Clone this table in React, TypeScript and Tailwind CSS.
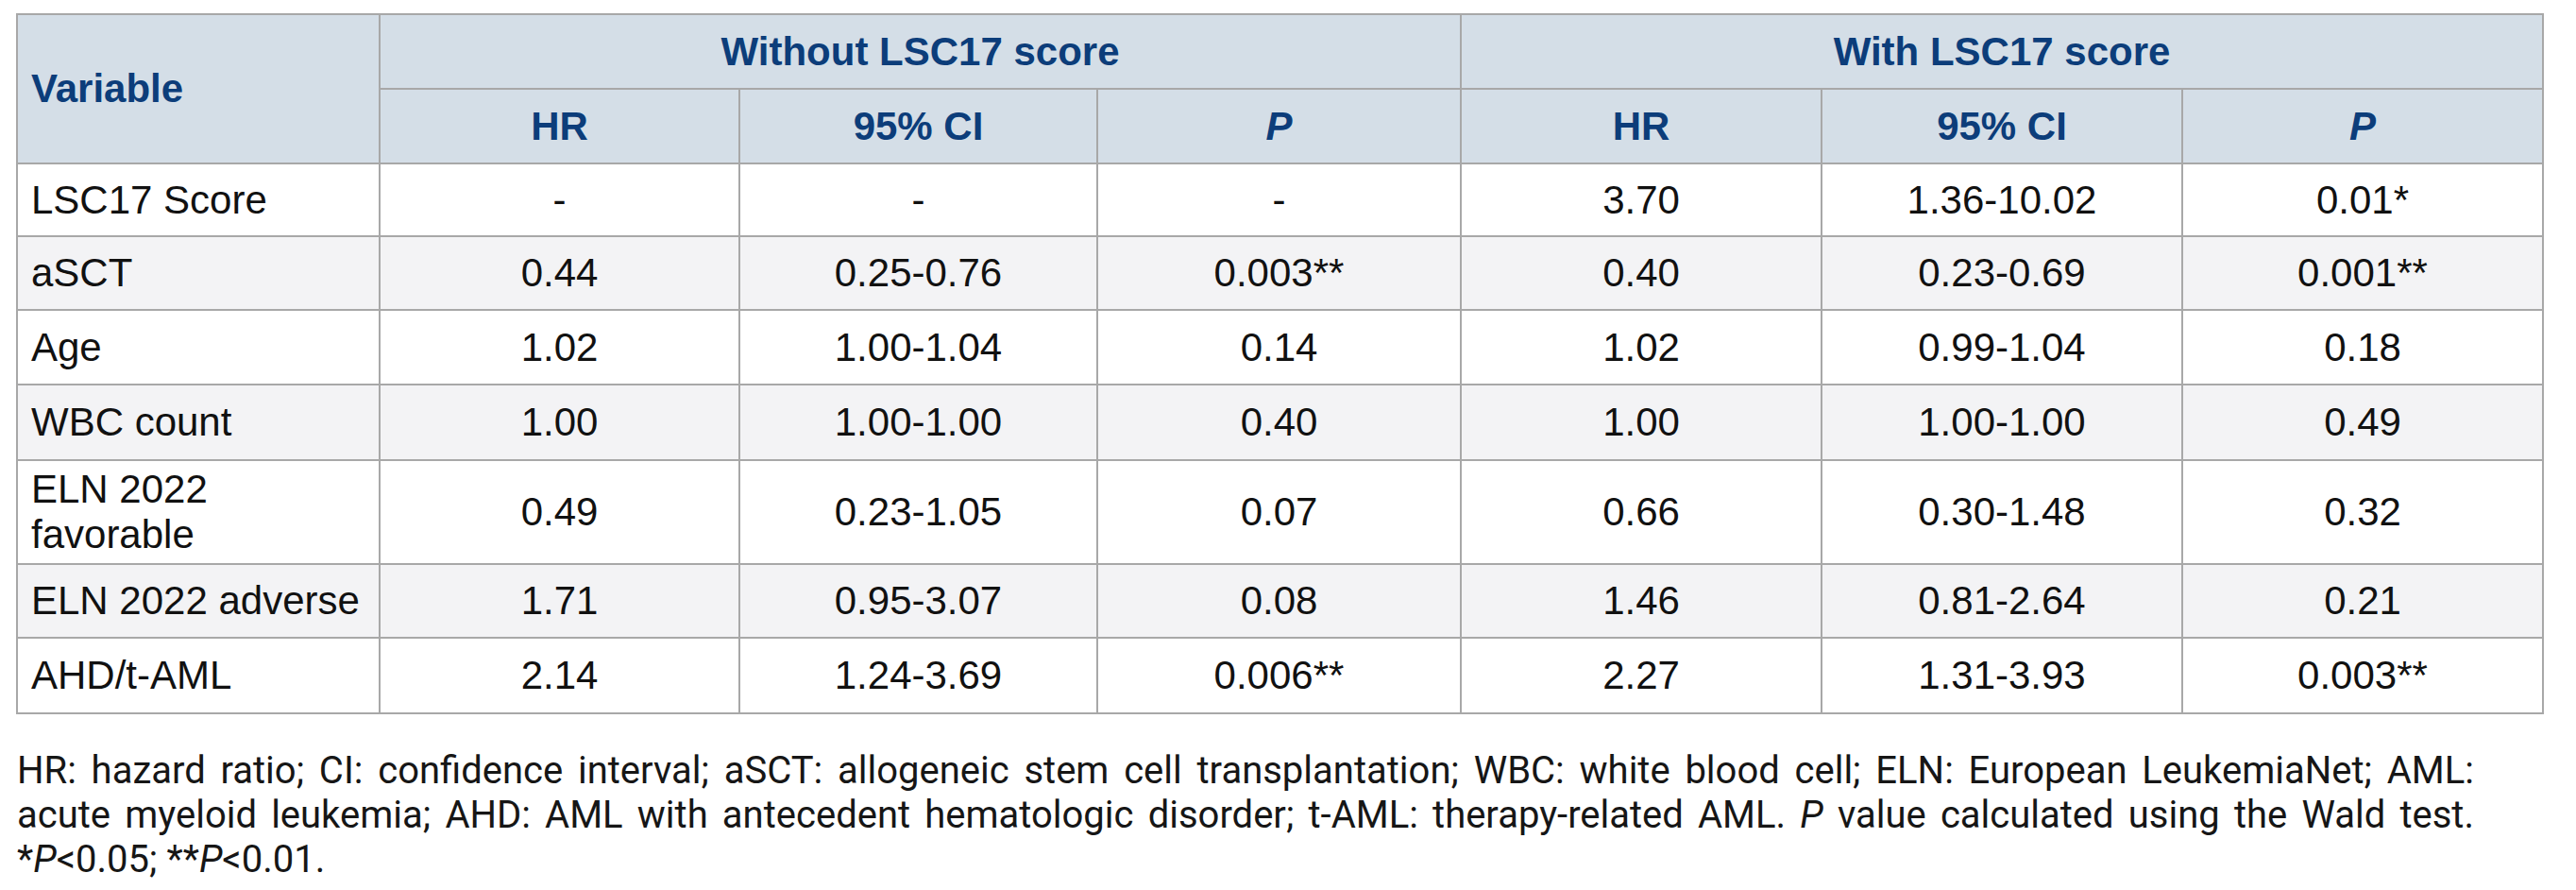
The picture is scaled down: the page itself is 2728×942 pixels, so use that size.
import React from 'react';

type Row = {
  label: React.ReactNode;
  without: [string, string, string];
  withScore: [string, string, string];
  h: string;
  shaded?: boolean;
};

const rows: Row[] = [
  { label: 'LSC17 Score', without: ['-', '-', '-'], withScore: ['3.70', '1.36-10.02', '0.01*'], h: 'h-[77px]' },
  { label: 'aSCT', without: ['0.44', '0.25-0.76', '0.003**'], withScore: ['0.40', '0.23-0.69', '0.001**'], h: 'h-[78px]', shaded: true },
  { label: 'Age', without: ['1.02', '1.00-1.04', '0.14'], withScore: ['1.02', '0.99-1.04', '0.18'], h: 'h-[79px]' },
  { label: 'WBC count', without: ['1.00', '1.00-1.00', '0.40'], withScore: ['1.00', '1.00-1.00', '0.49'], h: 'h-[80px]', shaded: true },
  {
    label: (
      <>
        ELN 2022
        <br />
        favorable
      </>
    ),
    without: ['0.49', '0.23-1.05', '0.07'],
    withScore: ['0.66', '0.30-1.48', '0.32'],
    h: 'h-[110px]',
  },
  { label: 'ELN 2022 adverse', without: ['1.71', '0.95-3.07', '0.08'], withScore: ['1.46', '0.81-2.64', '0.21'], h: 'h-[78px]', shaded: true },
  { label: 'AHD/t-AML', without: ['2.14', '1.24-3.69', '0.006**'], withScore: ['2.27', '1.31-3.93', '0.003**'], h: 'h-[80px]' },
];

const cell = 'border-2 border-[#a8a8a8] text-center align-middle p-0';
const headCell = 'border-2 border-[#a8a8a8] text-center align-middle p-0 font-bold text-[#0c3d7a]';

export default function App() {
  return (
    <div className="min-h-screen bg-white pl-[17px] pt-[14px] text-[#111111]">
      <table className="table-fixed border-collapse border-2 border-[#a0a0a0] [font-family:'Liberation_Sans',Arial,Helvetica,sans-serif] text-[42px] leading-[42px]">
        <colgroup>
          <col className="w-[384px]" />
          <col className="w-[381px]" />
          <col className="w-[379px]" />
          <col className="w-[385px]" />
          <col className="w-[382px]" />
          <col className="w-[382px]" />
          <col className="w-[382px]" />
        </colgroup>
        <thead className="bg-[#d4dee7]">
          <tr className="h-[79px]">
            <th rowSpan={2} className={`${headCell} pl-[14px] text-left`}>
              Variable
            </th>
            <th colSpan={3} className={headCell}>
              Without LSC17 score
            </th>
            <th colSpan={3} className={headCell}>
              With LSC17 score
            </th>
          </tr>
          <tr className="h-[79px]">
            <th className={headCell}>HR</th>
            <th className={headCell}>95% CI</th>
            <th className={headCell}>
              <i>P</i>
            </th>
            <th className={headCell}>HR</th>
            <th className={headCell}>95% CI</th>
            <th className={headCell}>
              <i>P</i>
            </th>
          </tr>
        </thead>
        <tbody>
          {rows.map((r, i) => (
            <tr key={i} className={`${r.h} ${r.shaded ? 'bg-[#f3f3f5]' : 'bg-white'}`}>
              <td className={`${cell} pl-[14px] text-left leading-[48px]`}>{r.label}</td>
              {r.without.map((v, j) => (
                <td key={`a${j}`} className={cell}>
                  {v}
                </td>
              ))}
              {r.withScore.map((v, j) => (
                <td key={`b${j}`} className={cell}>
                  {v}
                </td>
              ))}
            </tr>
          ))}
        </tbody>
      </table>

      <div className="mt-[36px] w-[2603px] pl-[1px] [font-family:Roboto,'Open_Sans',sans-serif] text-[40px] leading-[47px] text-[#161616]">
        <div className="text-justify [text-align-last:justify]">
          HR: hazard ratio; CI: confidence interval; aSCT: allogeneic stem cell transplantation; WBC: white blood cell; ELN: European LeukemiaNet; AML:
        </div>
        <div className="text-justify [text-align-last:justify]">
          acute myeloid leukemia; AHD: AML with antecedent hematologic disorder; t-AML: therapy-related AML. <i>P</i> value calculated using the Wald test.
        </div>
        <div>
          *<i>P</i>&lt;0.05; **<i>P</i>&lt;0.01.
        </div>
      </div>
    </div>
  );
}
